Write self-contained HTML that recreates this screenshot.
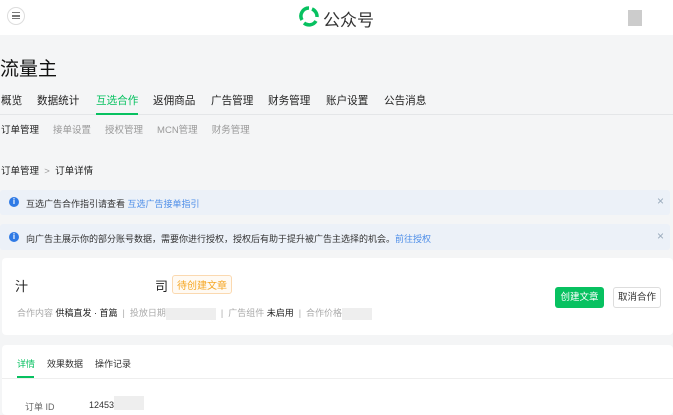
<!DOCTYPE html><html><head><meta charset="utf-8"><style>
*{margin:0;padding:0;box-sizing:border-box}
body{width:673px;height:413px;overflow:hidden;background:#f4f5f6;font-family:"Liberation Sans","Noto Sans CJK SC",sans-serif;color:#222;position:relative}
.a{position:absolute;white-space:nowrap}
.n{position:absolute;top:93px;font-size:10.6px;color:#222;white-space:nowrap}
</style></head><body>
<div class="a" style="left:0;top:0;width:673px;height:35px;background:#fff"></div>
<div class="a" style="left:7px;top:7px;width:18px;height:18px;border-radius:50%;border:1px solid #ddd"></div>
<div class="a" style="left:12px;top:12px;width:8px;height:7px;border-top:1.5px solid #777;border-bottom:1.5px solid #777"></div>
<div class="a" style="left:12px;top:15px;width:8px;height:1.5px;background:#777"></div>
<svg class="a" style="left:299px;top:6px" width="20" height="22" viewBox="0 0 20 22"><path d="M10 2 A8 8 0 0 0 3 14" stroke="#07c160" stroke-width="3.5" fill="none"/><path d="M5 17 A8 8 0 0 0 17 15" stroke="#07c160" stroke-width="3.5" fill="none"/><path d="M13 3 A8 8 0 0 1 18 11" stroke="#07c160" stroke-width="3.5" fill="none"/></svg>
<div class="a" style="left:323px;top:6px;font-size:17px;color:#333">公众号</div>
<div class="a" style="left:628px;top:10px;width:14px;height:16px;background:#ccc"></div>
<div class="a" style="left:0;top:54px;font-size:19px;color:#111">流量主</div>
<div class="n" style="left:1px">概览</div>
<div class="n" style="left:37px">数据统计</div>
<div class="n" style="left:96px;color:#07c160">互选合作</div>
<div class="n" style="left:153px">返佣商品</div>
<div class="n" style="left:211px">广告管理</div>
<div class="n" style="left:268px">财务管理</div>
<div class="n" style="left:326px">账户设置</div>
<div class="n" style="left:384px">公告消息</div>
<div class="a" style="left:0;top:114px;width:673px;height:1px;background:#e4e6e8"></div>
<div class="a" style="left:96px;top:113px;width:42px;height:2px;background:#07c160"></div>
<div class="a" style="left:1px;top:122px;font-size:9.5px;color:#999"><span style="color:#222">订单管理</span><span style="margin-left:14px">接单设置</span><span style="margin-left:14px">授权管理</span><span style="margin-left:14px">MCN管理</span><span style="margin-left:14px">财务管理</span></div>
<div class="a" style="left:1px;top:163px;font-size:9.5px;color:#222">订单管理 <span style="color:#999">&nbsp;&gt;&nbsp;</span> 订单详情</div>
<div class="a" style="left:0;top:190px;width:670px;height:25px;background:#ecf1f8;border-radius:3px"></div>
<div class="a" style="left:9px;top:197px;width:10px;height:10px;border-radius:50%;background:#2f7ae5;color:#fff;font-size:8px;text-align:center;line-height:10px;font-weight:bold">i</div>
<div class="a" style="left:26px;top:197px;font-size:9px;color:#333">互选广告合作指引请查看 <span style="color:#4e8ee8">互选广告接单指引</span></div>
<div class="a" style="left:657px;top:194px;font-size:12px;color:#9ab">×</div>
<div class="a" style="left:0;top:224px;width:670px;height:26px;background:#ecf1f8;border-radius:3px"></div>
<div class="a" style="left:9px;top:232px;width:10px;height:10px;border-radius:50%;background:#2f7ae5;color:#fff;font-size:8px;text-align:center;line-height:10px;font-weight:bold">i</div>
<div class="a" style="left:26px;top:232px;font-size:9px;color:#333">向广告主展示你的部分账号数据，需要你进行授权，授权后有助于提升被广告主选择的机会。<span style="color:#4e8ee8">前往授权</span></div>
<div class="a" style="left:657px;top:229px;font-size:12px;color:#9ab">×</div>
<div class="a" style="left:2px;top:258px;width:671px;height:77px;background:#fff;border-radius:4px"></div>
<div class="a" style="left:15px;top:276px;font-size:13px;color:#222">汁</div>
<div class="a" style="left:155px;top:276px;font-size:13px;color:#222">司</div>
<div class="a" style="left:172px;top:275px;padding:1px 4px;border:1px solid #fbd9b0;border-radius:3px;font-size:10px;color:#f5a623;background:#fffaf3">待创建文章</div>
<div class="a" style="left:17px;top:306px;font-size:9px;color:#aaa">合作内容 <span style="color:#222">供稿直发 · 首篇</span> &nbsp;|&nbsp; 投放日期<span style="display:inline-block;width:50px;height:12px;background:#eee;vertical-align:middle"></span> &nbsp;|&nbsp; 广告组件 <span style="color:#222">未启用</span> &nbsp;|&nbsp; 合作价格<span style="display:inline-block;width:30px;height:12px;background:#eee;vertical-align:middle"></span></div>
<div class="a" style="left:555px;top:287px;width:49px;height:21px;background:#07c160;border-radius:3px;color:#fff;font-size:9.5px;text-align:center;line-height:21px">创建文章</div>
<div class="a" style="left:613px;top:287px;width:48px;height:21px;background:#fff;border:1px solid #ddd;border-radius:3px;color:#333;font-size:9.5px;text-align:center;line-height:19px">取消合作</div>
<div class="a" style="left:2px;top:345px;width:671px;height:70px;background:#fff;border-radius:4px"></div>
<div class="a" style="left:17px;top:357px;font-size:9px;color:#333"><span style="color:#07c160">详情</span><span style="margin-left:12px">效果数据</span><span style="margin-left:12px">操作记录</span></div>
<div class="a" style="left:2px;top:378px;width:671px;height:1px;background:#eee"></div>
<div class="a" style="left:17px;top:376px;width:17px;height:2px;background:#07c160"></div>
<div class="a" style="left:25px;top:400px;font-size:9px;color:#666">订单 ID</div>
<div class="a" style="left:89px;top:400px;font-size:9px;color:#333">12453</div>
<div class="a" style="left:114px;top:396px;width:30px;height:14px;background:#eee"></div>
</body></html>
